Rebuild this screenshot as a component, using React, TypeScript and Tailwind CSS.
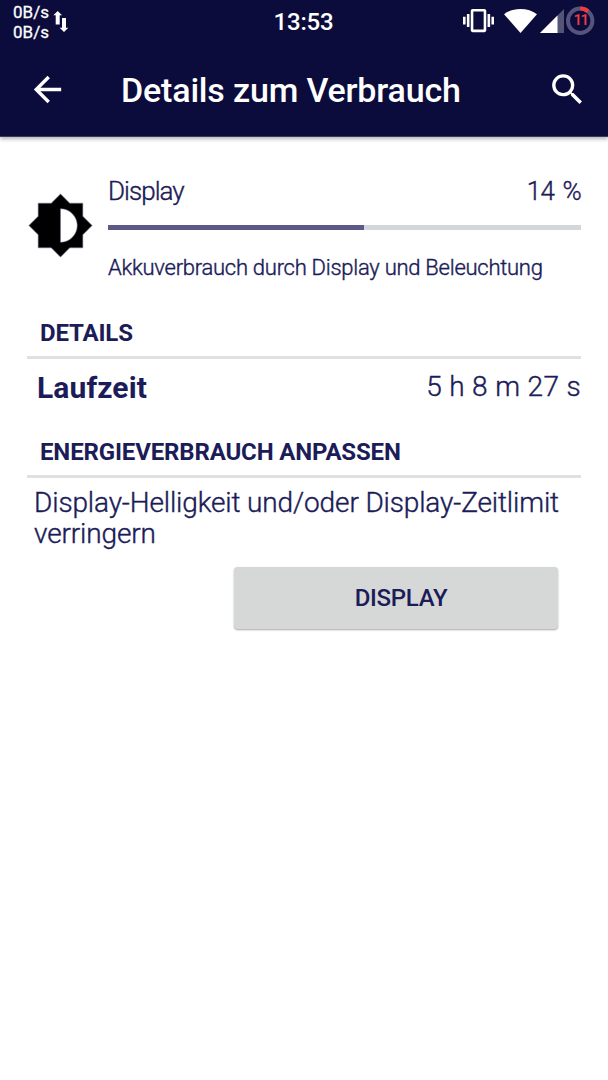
import type { ReactNode } from "react"

const usage = {
    percent: 14,
    barFill: 54.1,
    runtime: "5 h 8 m 27 s",
}

function StatusBar() {
    return (
        <div className="flex h-[44px] items-start">
            <div className="flex w-[262px] items-start pl-[13px] pt-[3px]">
                <div className="w-[36px] text-[17px] leading-[19.5px] font-normal whitespace-nowrap [-webkit-text-stroke:0.3px]">
                    <p>0B/s</p>
                    <p>0B/s</p>
                </div>
                <svg width="16" height="22" viewBox="0 0 16 22" className="ml-[4px] mt-[7px]" fill="currentColor">
                    <path d="M4.700 1 9 5.200H6.700V14.500H2.700V5.200H.4z" />
                    <path d="M11 22 6.700 17.800H9V8h4v9.800h2.300z" />
                </svg>
            </div>
            <p className="w-[83px] pt-[8px] text-center text-[24px] leading-7 font-medium tracking-[-0.2px]">13:53</p>
            <div className="flex flex-1 items-start pl-[118px]">
                <svg width="31" height="31" viewBox="0 0 24 24" className="mt-[5px]" fill="currentColor">
                    <path d="M0 15h2V9H0v6zm3 2h2V7H3v10zm19-8v6h2V9h-2zm-3 8h2V7h-2v10zM16.500 3h-9C6.670 3 6 3.670 6 4.500v15c0 .83.67 1.500 1.500 1.500h9c.83 0 1.500-.67 1.500-1.500v-15c0-.83-.67-1.500-1.500-1.500zM16 19H8V5h8v14z" />
                </svg>
                <svg width="33" height="24" viewBox="0 0 33 24" className="ml-[10px] mt-[9px]" fill="currentColor">
                    <path d="M16.500 24 0 5.200C4.600 1.700 10.200 0 16.500 0S28.400 1.700 33 5.200z" />
                </svg>
                <svg width="24" height="24" viewBox="0 0 24 24" className="ml-[3px] mt-[9px]" fill="currentColor">
                    <path d="M0 24 24 0v24z" opacity=".3" />
                    <path d="M0 24 17.500 6.500V24z" />
                </svg>
                <div className="ml-[2px] mt-[6px] grid size-[29px] shrink-0 place-items-center">
                    <svg width="29" height="29" viewBox="0 0 29 29" fill="none" strokeWidth="4" className="col-start-1 row-start-1">
                        <circle cx="14.200" cy="14.800" r="12.200" stroke="#55557c" />
                        <path d="M14.200 2.600A12.200 12.200 0 0 1 22 5.400" stroke="#f03c40" />
                    </svg>
                    <span className="col-start-1 row-start-1 text-[15px] leading-none font-medium tracking-[-1.6px] text-[#f03c40]">11</span>
                </div>
            </div>
        </div>
    )
}

function Toolbar() {
    return (
        <div className="flex h-[90px] items-center">
            <svg width="41" height="41" viewBox="0 0 24 24" className="ml-[27px]" fill="currentColor">
                <path d="M20 11H7.830l5.590-5.590L12 4l-8 8 8 8 1.410-1.410L7.830 13H20v-2z" />
            </svg>
            <h1 className="ml-[52px] flex-1 pt-[2px] pl-px text-[34px] leading-10 font-medium tracking-[-0.17px] whitespace-nowrap">
                Details zum Verbrauch
            </h1>
            <svg width="41" height="41" viewBox="0 0 24 24" className="mr-[20px]" fill="currentColor">
                <path d="M15.500 14h-.79l-.28-.27A6.471 6.471 0 0 0 16 9.500 6.500 6.500 0 1 0 9.500 16c1.610 0 3.090-.59 4.230-1.570l.27.28v.79l5 4.990L20.490 19l-4.990-5zm-6 0C7.010 14 5 11.990 5 9.500S7.010 5 9.500 5 14 7.010 14 9.500 11.990 14 9.500 14z" />
            </svg>
        </div>
    )
}

function SectionTitle({ children }: { children: ReactNode }) {
    return (
        <h2 className="h-[40px] border-b-[3px] border-[#e0e0e0] pl-[13px] text-[24px] leading-7 font-bold tracking-[-0.15px] whitespace-nowrap text-[#1b1c58]">
            {children}
        </h2>
    )
}

export default function App() {
    return (
        <div className="flex h-[1080px] w-[608px] flex-col overflow-hidden bg-white font-['Roboto',sans-serif] text-[#1b1c58]">
            <header className="h-[137px] shrink-0 border-b border-[#3a3b62] bg-[#0b0c3b] text-white shadow-[0_2px_4px_rgba(0,0,0,0.3)]">
                <StatusBar />
                <Toolbar />
            </header>

            <main className="pr-[27px] pl-[27px]">
                <section className="flex h-[182px] pt-[38px]">
                    <svg width="67" height="67" viewBox="0 0 24 24" className="mt-[17px] shrink-0">
                        <path
                            d="M20 15.310L23.310 12 20 8.690V4h-4.690L12 .69 8.690 4H4v4.690L.69 12 4 15.310V20h4.690L12 23.310 15.310 20H20v-4.690zM12 18V6c3.310 0 6 2.690 6 6s-2.690 6-6 6z"
                            fill="#000"
                            stroke="#77769b"
                            strokeWidth=".2"
                        />
                    </svg>
                    <div className="ml-[14px] flex-1">
                        <div className="flex h-[50px] justify-between text-[26px] leading-8 font-light [-webkit-text-stroke:0.4px]">
                            <span className="tracking-[-0.95px]">Display</span>
                            <span className="tracking-[-0.8px] [word-spacing:3px]">{usage.percent} %</span>
                        </div>
                        <div className="h-[5px] bg-[#d1d7db]">
                            <div className="h-full bg-[#5b5987]" style={{ width: `${usage.barFill}%` }} />
                        </div>
                        <p className="pt-[24px] text-[22px] leading-[28px] font-light tracking-[-0.26px] whitespace-nowrap [-webkit-text-stroke:0.4px]">
                            Akkuverbrauch durch Display und Beleuchtung
                        </p>
                    </div>
                </section>

                <SectionTitle>DETAILS</SectionTitle>
                <div className="flex h-[79px] justify-between pt-[11px] pl-[10px] leading-9">
                    <span className="text-[30px] font-bold tracking-[0.1px]">Laufzeit</span>
                    <span className="-mt-px text-[28px] font-light tracking-[0.35px] [-webkit-text-stroke:0.4px]">{usage.runtime}</span>
                </div>

                <SectionTitle>ENERGIEVERBRAUCH ANPASSEN</SectionTitle>
                <p className="h-[72px] pt-[9px] pl-[7px] text-[28px] leading-[31px] font-light tracking-[-0.13px] whitespace-nowrap [-webkit-text-stroke:0.4px]">
                    Display-Helligkeit und/oder Display-Zeitlimit
                    <br />
                    verringern
                </p>
                <button className="mt-[17px] ml-[207px] block h-[62px] w-[324px] rounded-[4px] bg-[#d6d8d7] pl-[10px] text-[24px] font-medium tracking-[-0.3px] shadow-[0_1px_2px_rgba(0,0,0,0.35)]">
                    DISPLAY
                </button>
            </main>
        </div>
    )
}
